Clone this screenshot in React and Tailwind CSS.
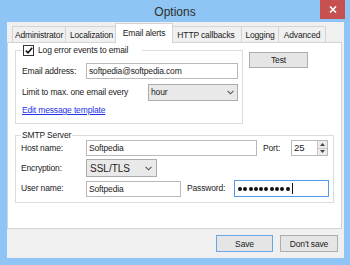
import React from "react";

function Chevron() {
  return (
    <svg width="7" height="5" viewBox="0 0 7 5">
      <path d="M0.6 0.8 L3.5 3.8 L6.4 0.8" fill="none" stroke="#555" strokeWidth="1.1" />
    </svg>
  );
}

function Tab({ label, className }) {
  return (
    <div
      className={
        "h-[16px] border-t border-l border-r border-[#d4d4d4] bg-[#f0f0f0] flex items-center justify-center leading-[14px] " +
        className
      }
    >
      {label}
    </div>
  );
}

export default function App() {
  return (
    <div className="w-[350px] h-[265px] bg-[#8ec5f4] flex flex-col font-['Liberation_Sans',Arial,sans-serif] text-[8.5px] tracking-[-0.15px] text-[#1b1b1b] overflow-hidden">
      {/* Title bar */}
      <div className="h-[22px] grid grid-cols-[1fr_auto_1fr] items-start">
        <div />
        <div className="text-[12px] tracking-normal text-[#2e2e2e] pt-[5px] leading-[14px]">Options</div>
        <div className="flex justify-end pr-[5px]">
          <div className="w-[25px] h-[19px] bg-[#c75050] flex items-center justify-center">
            <svg width="8" height="7" viewBox="0 0 8 7">
              <path d="M1 0.5 L7 6.5 M7 0.5 L1 6.5" stroke="#fff" strokeWidth="1.6" />
            </svg>
          </div>
        </div>
      </div>

      {/* Body */}
      <div className="ml-[7px] mr-[6px] h-[236px] bg-[#f0f0f0] flex flex-col">
        {/* Tabs */}
        <div className="h-[20px] flex items-end pl-[5px]">
          <Tab label="Administrator" className="w-[54px]" />
          <Tab label="Localization" className="w-[53px] -ml-px" />
          <div className="relative z-10 -ml-[3px] -mr-[3px] -mb-px w-[58px] h-[20px] bg-white border-t border-l border-r border-[#d4d4d4] flex items-start justify-center pt-[3px] leading-[12px]">
            Email alerts
          </div>
          <Tab label="HTTP callbacks" className="w-[72px]" />
          <Tab label="Logging" className="w-[38px] -ml-px" />
          <Tab label="Advanced" className="w-[48px] -ml-px" />
        </div>

        {/* Panel */}
        <div className="h-[187px] w-[335px] bg-white border border-[#d4d4d4] flex flex-col pl-[7px] pt-[2px]">
          <div className="flex items-start">
            <fieldset className="w-[228px] border border-[#dcdcdc] pl-[6px] pr-[4px] pb-[7px]">
              <legend className="pl-[1px] pr-[14px]">
                <div className="flex items-center h-[11px] gap-[4px]">
                  <div className="w-[11px] h-[11px] border border-[#333] bg-white flex items-center justify-center">
                    <svg width="8" height="7" viewBox="0 0 8 7">
                      <path d="M0.8 3.6 L3 5.8 L7.2 0.8" fill="none" stroke="#111" strokeWidth="1.6" />
                    </svg>
                  </div>
                  <span className="leading-[11px]">Log error events to email</span>
                </div>
              </legend>
              <div className="mt-[7px] flex items-center h-[16px]">
                <div className="w-[64px]">Email address:</div>
                <div className="w-[152px] h-[16px] border border-[#b9b9b9] bg-white flex items-center pl-[2px] leading-[12px]">
                  softpedia@softpedia.com
                </div>
              </div>
              <div className="mt-[5px] flex items-center h-[17px]">
                <div>Limit to max. one email every</div>
                <div className="ml-auto w-[90px] h-[17px] border border-[#acacac] bg-[#e9e9e9] flex items-center justify-between pl-[2px] pr-[3px]">
                  <span>hour</span>
                  <Chevron />
                </div>
              </div>
              <div className="mt-[4px] h-[11px] leading-[11px]">
                <span className="text-[#2233e6] underline">Edit message template</span>
              </div>
            </fieldset>
            <div className="ml-[6px] mt-[7px] w-[59px] h-[16px] border border-[#adadad] bg-[#e5e5e5] flex items-center justify-center leading-[12px]">
              Test
            </div>
          </div>

          <fieldset className="mt-[6px] w-[318px] border border-[#dcdcdc] pl-[5px] pr-[4px] pb-[5px]">
            <legend className="px-[1px] h-[10px] leading-[10px]">SMTP Server</legend>
            <div className="flex items-center h-[16px]">
              <div className="w-[65px]">Host name:</div>
              <div className="w-[171px] h-[16px] border border-[#b9b9b9] bg-white flex items-center pl-[2px] leading-[12px]">
                Softpedia
              </div>
              <div className="ml-[6px] w-[28px]">Port:</div>
              <div className="w-[37px] h-[16px] border border-[#b9b9b9] bg-white flex items-stretch">
                <div className="flex-1 flex items-center pl-[2px] text-[9.5px] tracking-normal">25</div>
                <div className="w-[10px] border-l border-[#c8c8c8] bg-[#ececec] flex flex-col">
                  <div className="flex-1 flex items-center justify-center border-b border-[#c8c8c8]">
                    <svg width="5" height="3" viewBox="0 0 5 3"><path d="M0 3 L2.5 0 L5 3 Z" fill="#444" /></svg>
                  </div>
                  <div className="flex-1 flex items-center justify-center">
                    <svg width="5" height="3" viewBox="0 0 5 3"><path d="M0 0 L2.5 3 L5 0 Z" fill="#444" /></svg>
                  </div>
                </div>
              </div>
            </div>
            <div className="mt-[3px] flex items-center h-[18px]">
              <div className="w-[65px]">Encryption:</div>
              <div className="w-[71px] h-[18px] border border-[#acacac] bg-[#e9e9e9] flex items-center justify-between pl-[3px] pr-[4px]">
                <span className="text-[10px] tracking-normal">SSL/TLS</span>
                <Chevron />
              </div>
            </div>
            <div className="mt-[3px] flex items-center h-[17px]">
              <div className="w-[65px]">User name:</div>
              <div className="w-[95px] h-[16px] border border-[#b9b9b9] bg-white flex items-center pl-[2px] leading-[12px]">
                Softpedia
              </div>
              <div className="ml-[6px] w-[47px]">Password:</div>
              <div className="w-[95px] h-[17px] border border-[#4f9ae8] bg-white flex items-center pl-[3px] gap-[1.3px]">
                {[0, 1, 2, 3, 4, 5, 6, 7, 8, 9].map((i) => (
                  <span key={i} className="w-[4px] h-[4px] rounded-full bg-[#111]" />
                ))}
                <span className="ml-[1px] w-px h-[11px] bg-[#111]" />
              </div>
            </div>
          </fieldset>
        </div>

        {/* Footer */}
        <div className="flex-1 flex justify-end items-start pt-[6px] pr-[6px] gap-[7px]">
          <div className="w-[57px] h-[17px] border border-[#6aa6e4] bg-[#e5e5e5] flex items-center justify-center leading-[12px]">
            Save
          </div>
          <div className="w-[58px] h-[17px] border border-[#adadad] bg-[#e5e5e5] flex items-center justify-center leading-[12px]">
            Don't save
          </div>
        </div>
      </div>
    </div>
  );
}
